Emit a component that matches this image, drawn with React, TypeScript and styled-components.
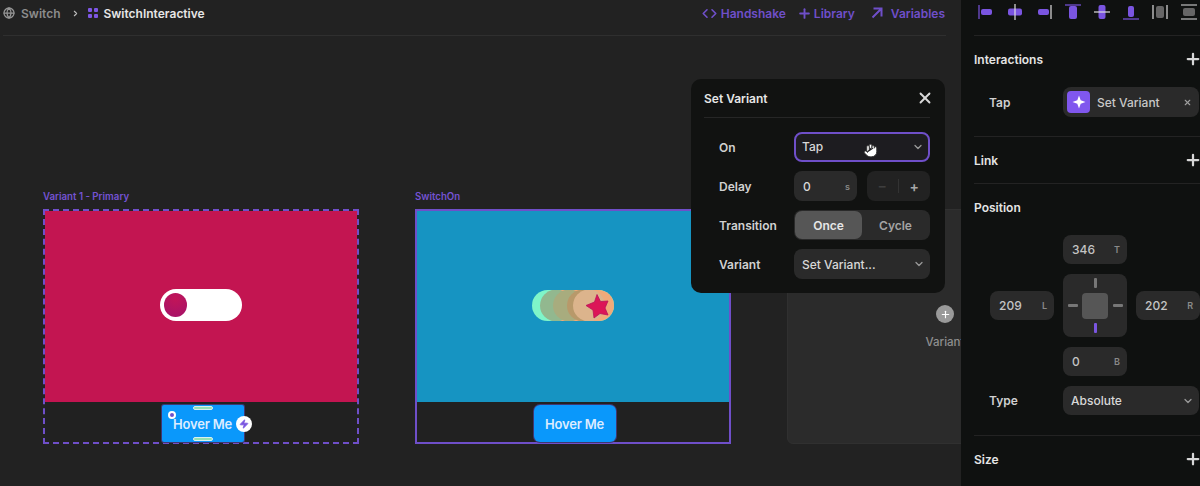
import React from 'react';
import styled, { createGlobalStyle } from 'styled-components';
import { ChevronDown, ChevronRight, Code, Globe, Hand, Plus, X, Zap } from 'lucide-react';

const PURPLE = '#6f4fc9';

const GlobalStyle = createGlobalStyle`
  html, body { margin: 0; padding: 0; background: #222222; }
  body { font-family: Inter, "Liberation Sans", sans-serif; }
  * { box-sizing: border-box; }
`;

const Page = styled.div`
  display: flex;
  width: 1200px;
  height: 486px;
  overflow: hidden;
  font-size: 12px;
  font-weight: 600;
  color: #e4e4e4;
`;

const Main = styled.main`
  position: relative;
  flex: 0 0 961px;
  display: flex;
  flex-direction: column;
  background: #222222;
  overflow: hidden;
`;

const TopBar = styled.header`
  flex: 0 0 36px;
  margin: 0 15px 0 3px;
  padding: 0 1px 9px 0;
  display: flex;
  align-items: center;
  justify-content: space-between;
  border-bottom: 1px solid #2f2f2f;
`;

const Crumbs = styled.div`
  display: flex;
  align-items: center;
`;

const CrumbIcon = styled(Globe)`
  margin-right: 6px;
  color: #969696;
`;

const CrumbText = styled.span<{ $strong?: boolean }>`
  color: ${p => (p.$strong ? '#e6e6e6' : '#8c8c8c')};
  margin-left: ${p => (p.$strong ? '5px' : '0')};
`;

const CrumbSep = styled.span`
  display: flex;
  margin: 0 8px 0 11px;
  color: #bbbbbb;
`;

const GridMark = styled.span`
  display: grid;
  grid-template-columns: 4px 4px;
  gap: 2px;
  & > i {
    display: block;
    height: 4px;
    border-radius: 1px;
    background: #7e57e6;
  }
`;

const TopActions = styled.nav`
  display: flex;
  align-items: center;
  gap: 11px;
`;

const TopAction = styled.span<{ $gap: number; $push?: number }>`
  display: flex;
  align-items: center;
  gap: ${p => p.$gap}px;
  margin-left: ${p => p.$push ?? 0}px;
  color: ${PURPLE};
  font-weight: 600;
  font-size: 12px;
`;

const Board = styled.div`
  flex: 1;
  display: flex;
  gap: 56px;
  padding: 154px 0 0 43px;
`;

const VariantColumn = styled.section`
  flex: 0 0 316px;
  display: flex;
  flex-direction: column;
`;

const VariantLabel = styled.div`
  height: 19px;
  font-size: 9.7px;
  font-weight: 600;
  line-height: 14px;
  color: #7453d3;
`;

const Frame = styled.div<{ $dashed?: boolean }>`
  height: 235px;
  display: flex;
  flex-direction: column;
  border: 2px ${p => (p.$dashed ? 'dashed' : 'solid')} ${PURPLE};
`;

const Stage = styled.div<{ $color: string }>`
  flex: 0 0 191px;
  display: flex;
  align-items: center;
  justify-content: center;
  padding-bottom: 3px;
  background: ${p => p.$color};
`;

const FrameFoot = styled.div`
  flex: 1;
  display: flex;
  align-items: flex-start;
  justify-content: center;
  padding: 3px 0 0 3px;
  background: #212121;
`;

const HoverButton = styled.div<{ $selected?: boolean }>`
  position: relative;
  width: 82px;
  height: 37px;
  display: flex;
  align-items: center;
  justify-content: center;
  border-radius: ${p => (p.$selected ? '2px' : '6px')};
  background: #0a98fb;
  box-shadow: 0 0 0 1px #3f3672;
  font-size: 13px;
  font-weight: 600;
  letter-spacing: -0.2px;
  color: #dcecff;
`;

const Handle = styled.span<{ $edge: 'top' | 'bottom' }>`
  position: absolute;
  left: 31px;
  ${p => p.$edge}: 1px;
  width: 20px;
  height: 4px;
  border-radius: 2px;
  background: #93e0b4;
  border: 1px solid #d8f0f0;
`;

const PinDot = styled.span`
  position: absolute;
  left: 6px;
  top: 6px;
  width: 8px;
  height: 8px;
  border-radius: 50%;
  background: ${PURPLE};
  border: 2px solid #ffffff;
`;

const BoltBadge = styled.span`
  position: absolute;
  right: -8px;
  top: 11px;
  width: 16px;
  height: 16px;
  display: flex;
  align-items: center;
  justify-content: center;
  border-radius: 50%;
  background: #ffffff;
  color: #7a55e0;
`;

const ToggleOff = styled.div`
  width: 82px;
  height: 32px;
  display: flex;
  align-items: center;
  padding-left: 4px;
  border-radius: 16px;
  background: #ffffff;
`;

const Knob = styled.span`
  width: 23px;
  height: 24px;
  border-radius: 50%;
  background: radial-gradient(circle at 50% 25%, #c21558, #a3126a);
`;

const ToggleTrail = styled.div`
  width: 82px;
  height: 31px;
  border-radius: 16px;
  overflow: hidden;
  & > svg { display: block; }
`;

const AddBox = styled.div`
  flex: 0 0 316px;
  height: 235px;
  margin-top: 19px;
  display: flex;
  flex-direction: column;
  align-items: center;
  padding-top: 95px;
  gap: 12px;
  border: 1px solid #303030;
  border-radius: 6px;
  background: #2b2b2b;
`;

const AddDot = styled.span`
  width: 18px;
  height: 18px;
  display: flex;
  align-items: center;
  justify-content: center;
  border-radius: 50%;
  background: #9a9a9a;
  color: #ffffff;
`;

const AddLabel = styled.span`
  font-size: 11.5px;
  font-weight: 500;
  color: #8f8f8f;
`;

const Popup = styled.div`
  position: absolute;
  left: 691px;
  top: 79px;
  width: 254px;
  height: 214px;
  padding: 0 15px 14px 13px;
  border-radius: 10px;
  background: #111211;
`;

const PopupHead = styled.div`
  height: 39px;
  display: flex;
  align-items: center;
  justify-content: space-between;
  border-bottom: 1px solid #262626;
  color: #e6e6e6;
`;

const PopupClose = styled(X)`
  margin-right: -4px;
  color: #d8d8d8;
`;

const PopupBody = styled.div`
  padding: 14px 0 0 15px;
  display: grid;
  grid-template-columns: 75px 136px;
  grid-auto-rows: 30px;
  row-gap: 9px;
  align-items: center;
`;

const FieldLabel = styled.span`
  color: #d0d0d0;
`;

const Control = styled.div<{ $focus?: boolean }>`
  position: relative;
  height: 100%;
  display: flex;
  align-items: center;
  justify-content: space-between;
  padding: ${p => (p.$focus ? '0 4px 1px 6px' : '0 5px 0 8px')};
  border-radius: 8px;
  background: ${p => (p.$focus ? '#1d1c20' : '#2a2a2a')};
  border: ${p => (p.$focus ? `2px solid ${PURPLE}` : 'none')};
  font-weight: 500;
  color: #d8d8d8;
`;

const Caret = styled(ChevronDown)`
  color: #9a9a9a;
`;

const PointerHand = styled(Hand)`
  position: absolute;
  left: 67px;
  top: 9px;
  color: #333333;
  fill: #ffffff;
`;

const SplitRow = styled.div`
  height: 100%;
  display: grid;
  grid-template-columns: 63px 63px;
  gap: 10px;
`;

const UnitInput = styled.div`
  height: 100%;
  display: flex;
  align-items: center;
  justify-content: space-between;
  padding: 0 7px 0 9px;
  border-radius: 8px;
  background: #2a2a2a;
  font-weight: 500;
  color: #d8d8d8;
`;

const Unit = styled.span`
  font-size: 9px;
  font-weight: 600;
  color: #8a8a8a;
`;

const Stepper = styled.div`
  height: 100%;
  display: grid;
  grid-template-columns: 1fr 1fr;
  align-items: center;
  justify-items: center;
  border-radius: 8px;
  background: #222222;
  font-size: 14px;
  color: #a8a8a8;
`;

const StepMinus = styled.span`
  width: 100%;
  text-align: center;
  color: #3e3e3e;
  border-right: 1px solid #333333;
  line-height: 14px;
`;

const Segments = styled.div`
  height: 100%;
  display: grid;
  grid-template-columns: 67px 1fr;
  padding: 1px;
  border-radius: 8px;
  background: #2a2a2a;
`;

const Segment = styled.span<{ $active?: boolean }>`
  display: flex;
  align-items: center;
  justify-content: center;
  border-radius: 7px;
  background: ${p => (p.$active ? '#565656' : 'transparent')};
  color: ${p => (p.$active ? '#e6e6e6' : '#a4a4a4')};
`;

const Side = styled.aside`
  flex: 1;
  display: flex;
  flex-direction: column;
  padding-left: 13px;
  background: #0f1110;
`;

const AlignRow = styled.div`
  flex: 0 0 36px;
  display: flex;
  align-items: flex-start;
  justify-content: space-between;
  padding: 4px 3px 0 4px;
  border-bottom: 1px solid #232323;
`;

const AlignSvg = styled.svg`
  display: block;
  width: 16px;
  height: 16px;
`;

const Section = styled.section<{ $last?: boolean; $pad: number }>`
  padding: 14px 0 ${p => p.$pad}px;
  border-bottom: ${p => (p.$last ? 'none' : '1px solid #232323')};
`;

const SectionHead = styled.div`
  height: 18px;
  display: flex;
  align-items: center;
  justify-content: space-between;
  color: #e4e4e4;
`;

const AddIcon = styled(Plus)`
  margin-right: -2px;
  color: #d8d8d8;
`;

const PropRow = styled.div<{ $top: number }>`
  margin-top: ${p => p.$top}px;
  padding-left: 15px;
  display: grid;
  grid-template-columns: 74px 136px;
  align-items: center;
`;

const ActionPill = styled.div`
  height: 30px;
  display: flex;
  align-items: center;
  padding: 0 7px 0 4px;
  border-radius: 8px;
  background: #2a2a2a;
  font-weight: 500;
  color: #c8c8c8;
`;

const ActionIcon = styled.span`
  width: 23px;
  height: 22px;
  display: flex;
  align-items: center;
  justify-content: center;
  margin-right: 7px;
  border-radius: 4px;
  background: #8057ee;
`;

const PillClose = styled(X)`
  margin-left: auto;
  color: #a0a0a0;
`;

const PinGrid = styled.div`
  margin: 19px 0 0 16px;
  display: grid;
  grid-template-columns: 64px 64px 64px;
  grid-template-rows: 29px 63px 29px;
  gap: 10px 9px;
  align-items: center;
`;

const PinInput = styled(UnitInput)<{ $col: number; $row: number }>`
  grid-column: ${p => p.$col};
  grid-row: ${p => p.$row};
  height: 29px;
  color: #c4c4c4;
`;

const PinPad = styled.div`
  grid-column: 2;
  grid-row: 2;
  height: 63px;
  display: grid;
  grid-template-columns: 1fr 26px 1fr;
  grid-template-rows: 1fr 26px 1fr;
  align-items: center;
  justify-items: center;
  border-radius: 8px;
  background: #2a2a2a;
`;

const PinCore = styled.span`
  grid-column: 2;
  grid-row: 2;
  width: 26px;
  height: 26px;
  border-radius: 4px;
  background: #565656;
`;

const PinTick = styled.span<{ $col: number; $row: number; $vertical?: boolean; $on?: boolean }>`
  grid-column: ${p => p.$col};
  grid-row: ${p => p.$row};
  width: ${p => (p.$vertical ? '3px' : '10px')};
  height: ${p => (p.$vertical ? '10px' : '3px')};
  border-radius: 1px;
  background: ${p => (p.$on ? '#7a55e0' : '#777777')};
`;

const TypeSelect = styled(Control)`
  height: 29px;
`;

const alignIcons = [
  { line: 'M1 1v14', box: [3, 5, 11, 6], lineOn: true, boxOn: true },
  { line: 'M8 0v16', box: [1, 4.5, 14, 7], lineOn: false, boxOn: true },
  { line: 'M15 1v14', box: [2, 5, 11, 6], lineOn: false, boxOn: true },
  { line: 'M0 1h16', box: [4, 2, 8, 13], lineOn: true, boxOn: true },
  { line: 'M0 8h16', box: [4.5, 1, 7, 14], lineOn: false, boxOn: true },
  { line: 'M0 15h16', box: [5, 2, 6, 11], lineOn: true, boxOn: true },
  { line: 'M1 1v14M15 1v14', box: [4, 2, 8, 12], lineOn: false, boxOn: false },
  { line: 'M0 1h16M0 15h16', box: [2, 4, 12, 8], lineOn: false, boxOn: false },
];

const Star = () => (
  <polygon
    points="65,4.5 68.5,11.5 76,11 73,18 76,25 68,23.5 62,28 61,20 54,15.5 62.5,12"
    fill="#dc1557"
    stroke="#b8145a"
    strokeWidth="0.8"
    strokeLinejoin="round"
  />
);

const SparkIcon = () => (
  <svg width="14" height="14" viewBox="0 0 14 14">
    <path d="M7 0.5 8.7 5.3 13.5 7 8.7 8.7 7 13.5 5.3 8.7 0.5 7 5.3 5.3Z" fill="#ffffff" />
  </svg>
);

const ArrowMark = () => (
  <svg width="12" height="12" viewBox="0 0 12 12" fill="none" stroke="currentColor" strokeWidth="2">
    <path d="M1.5 10.5 10 2M2.5 1.5h8v8" />
  </svg>
);

export default function App() {
  return (
    <Page>
      <GlobalStyle />
      <Main>
        <TopBar>
          <Crumbs>
            <CrumbIcon size={12} strokeWidth={2.5} />
            <CrumbText>Switch</CrumbText>
            <CrumbSep><ChevronRight size={9} strokeWidth={3} /></CrumbSep>
            <GridMark><i /><i /><i /><i /></GridMark>
            <CrumbText $strong>SwitchInteractive</CrumbText>
          </Crumbs>
          <TopActions>
            <TopAction $gap={4}><Code size={15} strokeWidth={2.6} />Handshake</TopAction>
            <TopAction $gap={2}><Plus size={15} strokeWidth={3} />Library</TopAction>
            <TopAction $gap={8} $push={5}><ArrowMark />Variables</TopAction>
          </TopActions>
        </TopBar>
        <Board>
          <VariantColumn>
            <VariantLabel>Variant 1 - Primary</VariantLabel>
            <Frame $dashed>
              <Stage $color="#c31551">
                <ToggleOff><Knob /></ToggleOff>
              </Stage>
              <FrameFoot>
                <HoverButton $selected>
                  <PinDot />
                  <Handle $edge="top" />
                  Hover Me
                  <Handle $edge="bottom" />
                  <BoltBadge><Zap size={10} fill="#7a55e0" /></BoltBadge>
                </HoverButton>
              </FrameFoot>
            </Frame>
          </VariantColumn>
          <VariantColumn>
            <VariantLabel>SwitchOn</VariantLabel>
            <Frame>
              <Stage $color="#1694c2">
                <ToggleTrail>
                  <svg width="82" height="31" viewBox="0 0 82 31">
                    <rect width="82" height="31" fill="#7ff5c9" />
                    <rect x="24" width="58" height="31" fill="#f0aa7a" />
                    <circle cx="24" cy="15.5" r="16" fill="#92b88f" />
                    <circle cx="37" cy="15.5" r="16" fill="#a8ac7e" />
                    <circle cx="51" cy="15.5" r="16" fill="#b8996a" />
                    <circle cx="57" cy="15.5" r="16" fill="#dcb48c" />
                    <Star />
                  </svg>
                </ToggleTrail>
              </Stage>
              <FrameFoot>
                <HoverButton>Hover Me</HoverButton>
              </FrameFoot>
            </Frame>
          </VariantColumn>
          <AddBox>
            <AddDot><Plus size={11} strokeWidth={2.5} /></AddDot>
            <AddLabel>Variant</AddLabel>
          </AddBox>
        </Board>
        <Popup>
          <PopupHead>
            Set Variant
            <PopupClose size={18} strokeWidth={2.5} />
          </PopupHead>
          <PopupBody>
            <FieldLabel>On</FieldLabel>
            <Control $focus>
              Tap
              <PointerHand size={15} strokeWidth={1.5} />
              <Caret size={12} strokeWidth={2.5} />
            </Control>
            <FieldLabel>Delay</FieldLabel>
            <SplitRow>
              <UnitInput>0<Unit>s</Unit></UnitInput>
              <Stepper>
                <StepMinus>−</StepMinus>
                <span>+</span>
              </Stepper>
            </SplitRow>
            <FieldLabel>Transition</FieldLabel>
            <Segments>
              <Segment $active>Once</Segment>
              <Segment>Cycle</Segment>
            </Segments>
            <FieldLabel>Variant</FieldLabel>
            <Control>
              Set Variant...
              <Caret size={12} strokeWidth={2.5} />
            </Control>
          </PopupBody>
        </Popup>
      </Main>
      <Side>
        <AlignRow>
          {alignIcons.map((icon, i) => (
            <AlignSvg key={i} viewBox="0 0 16 16">
              <rect
                x={icon.box[0]}
                y={icon.box[1]}
                width={icon.box[2]}
                height={icon.box[3]}
                rx="2"
                fill={icon.boxOn ? '#7a55e0' : '#666666'}
              />
              <path d={icon.line} stroke={icon.lineOn ? '#7a55e0' : '#e0e0e0'} strokeWidth="1.2" fill="none" />
            </AlignSvg>
          ))}
        </AlignRow>
        <Section $pad={19}>
          <SectionHead>Interactions<AddIcon size={18} strokeWidth={3} /></SectionHead>
          <PropRow $top={19}>
            <FieldLabel>Tap</FieldLabel>
            <ActionPill>
              <ActionIcon><SparkIcon /></ActionIcon>
              Set Variant
              <PillClose size={9} strokeWidth={3} />
            </ActionPill>
          </PropRow>
        </Section>
        <Section $pad={14}>
          <SectionHead>Link<AddIcon size={18} strokeWidth={3} /></SectionHead>
        </Section>
        <Section $pad={20}>
          <SectionHead>Position</SectionHead>
          <PinGrid>
            <PinInput $col={2} $row={1}>346<Unit>T</Unit></PinInput>
            <PinInput $col={1} $row={2}>209<Unit>L</Unit></PinInput>
            <PinPad>
              <PinCore />
              <PinTick $col={2} $row={1} $vertical />
              <PinTick $col={1} $row={2} />
              <PinTick $col={3} $row={2} />
              <PinTick $col={2} $row={3} $vertical $on />
            </PinPad>
            <PinInput $col={3} $row={2}>202<Unit>R</Unit></PinInput>
            <PinInput $col={2} $row={3}>0<Unit>B</Unit></PinInput>
          </PinGrid>
          <PropRow $top={10}>
            <FieldLabel>Type</FieldLabel>
            <TypeSelect>
              Absolute
              <Caret size={12} strokeWidth={2.5} />
            </TypeSelect>
          </PropRow>
        </Section>
        <Section $last $pad={0}>
          <SectionHead>Size<AddIcon size={18} strokeWidth={3} /></SectionHead>
        </Section>
      </Side>
    </Page>
  );
}
